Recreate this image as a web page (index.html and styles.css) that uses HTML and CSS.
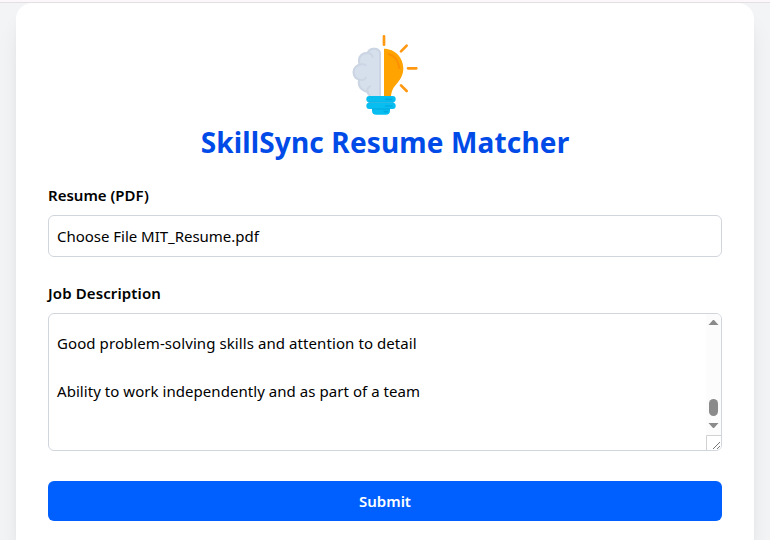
FILE: index.html
```html
<!DOCTYPE html>
<html lang="en">
<head>
<meta charset="utf-8">
<title>SkillSync Resume Matcher</title>
<link rel="stylesheet" href="styles.css">
</head>
<body>
<div class="topline"></div>
<main class="card">
  <svg class="logo" viewBox="15 30 240 240" aria-hidden="true">
    <g fill="none" stroke="#ff9811" stroke-width="8" stroke-linecap="round">
      <path d="M132 34V59M200 62L183 79M204 130H229M183 181L200 198"/>
    </g>
    <path fill="#d6e0ec" d="M123 213V82C121 73 113 68 101 68C91 68 84 73 81 81C66 81 54 91 54 107C54 111 55 114 56 117C45 121 38 130 38 142C38 154 45 162 54 166C51 178 56 190 65 196C70 200 75 202 80 203C82 208 84 211 87 213Z"/>
    <g fill="none" stroke="#ccd5e3" stroke-width="6" stroke-linecap="round" stroke-linejoin="round">
      <path d="M120 209V84C118 75 111 71 102 71C93 71 86 76 83 84C68 83 57 94 57 107C57 112 58 116 60 119C48 121 41 131 41 142C41 153 48 161 58 164C54 176 59 188 67 193C71 197 77 200 83 200C84 204 86 208 89 211"/>
      <path d="M83 84C91 84 96 89 98 96M60 119C65 116 72 117 77 121M58 164C66 167 75 164 78 158M83 200C81 193 84 187 90 184"/>
    </g>
    <path fill="#ffa300" d="M132 71C165 71 190 98 190 130C190 151 180 166 167 180C158 190 154 201 153 213H132Z"/>
    <path fill="none" stroke="#ff9100" stroke-width="6" stroke-linecap="round" d="M146 87C164 92 175 106 178 129"/>
    <path fill="#08bdf0" d="M96 244H150V257Q150 269 137 269H109Q96 269 96 257Z"/>
    <rect x="79" y="213" width="88" height="19" rx="9" fill="#08bdf0"/>
    <rect x="79" y="233" width="88" height="19" rx="9" fill="#08bdf0"/>
    <path fill="none" stroke="#00a3d9" stroke-width="2.500" d="M85 232H161M96 252H150"/>
    <path fill="none" stroke="#00abe2" stroke-width="5" stroke-linecap="round" d="M137 223H156M137 243H156M133 260H142"/>
  </svg>
  <h1 class="title">SkillSync Resume Matcher</h1>
  <div class="label">Resume (PDF)</div>
  <div class="file">Choose File MIT_Resume.pdf</div>
  <div class="label second">Job Description</div>
  <div class="area">
    <div class="lines">
      <p class="wide">Good problem-solving skills and attention to detail</p>
      <p>Ability to work independently and as part of a team</p>
    </div>
    <svg class="scroll" viewBox="0 0 15 136" aria-hidden="true">
      <rect width="15" height="136" fill="#fcfcfc"/>
      <path fill="#8b8b8b" d="M2.500 11L7 6H8L12.500 11ZM2.500 109L7 114H8L12.500 109Z"/>
      <rect x="3" y="85" width="9" height="17" rx="4.500" fill="#8b8b8b"/>
      <path fill="#fff" stroke="#d1d1d1" d="M.5 137V121.500H16V137Z"/>
      <path fill="none" stroke="#777" stroke-width="1" d="M7 135L14 128M11 135L14 132"/>
    </svg>
  </div>
  <button class="submit" type="button">Submit</button>
</main>
</body>
</html>
```
FILE: styles.css
```css
* { box-sizing: border-box; }
html, body { margin: 0; height: 100%; }
body {
  overflow: hidden;
  background: #f3f4f6;
  color: #000;
  font: 15px/24px "Noto Sans", "Open Sans", sans-serif;
}
.topline {
  height: 3px;
  background: #fcf7fa;
  border-bottom: 1px solid #e4e0e2;
}
.card {
  display: flex;
  flex-direction: column;
  height: calc(100% - 3px);
  margin: 0 16px;
  padding: 32px 32px 0;
  background: #fff;
  border-radius: 16px 16px 0 0;
  box-shadow: 0 20px 25px -5px rgba(0, 0, 0, .1), 0 8px 10px -6px rgba(0, 0, 0, .1);
}
.logo { align-self: center; flex: none; width: 80px; height: 80px; }
.title {
  margin: 9px 0 0;
  height: 36px;
  font-size: 28px;
  line-height: 36px;
  font-weight: 700;
  letter-spacing: .15px;
  text-align: center;
  color: #004be8;
}
.label { margin-top: 23px; height: 24px; font-weight: 600; white-space: nowrap; }
.second { margin-top: 24px; letter-spacing: .12px; }
.file, .area {
  border: 1px solid #d1d5dc;
  border-radius: 6px;
  white-space: nowrap;
}
.file { margin-top: 8px; height: 42px; padding: 8px; letter-spacing: -.02px; }
.area { display: flex; justify-content: space-between; margin-top: 8px; height: 138px; overflow: hidden; }
.lines { padding: 17px 8px 0; letter-spacing: .05px; }
.lines p { margin: 0 0 24px; }
.lines .wide { letter-spacing: .08px; }
.scroll { flex: none; width: 15px; height: 136px; }
.submit {
  flex: none;
  margin: 30px 0 0;
  height: 40px;
  padding: 0;
  border: 0;
  border-radius: 6px;
  background: #0060ff;
  color: #fff;
  font: 600 15px/24px "Noto Sans", "Open Sans", sans-serif;
}
```
